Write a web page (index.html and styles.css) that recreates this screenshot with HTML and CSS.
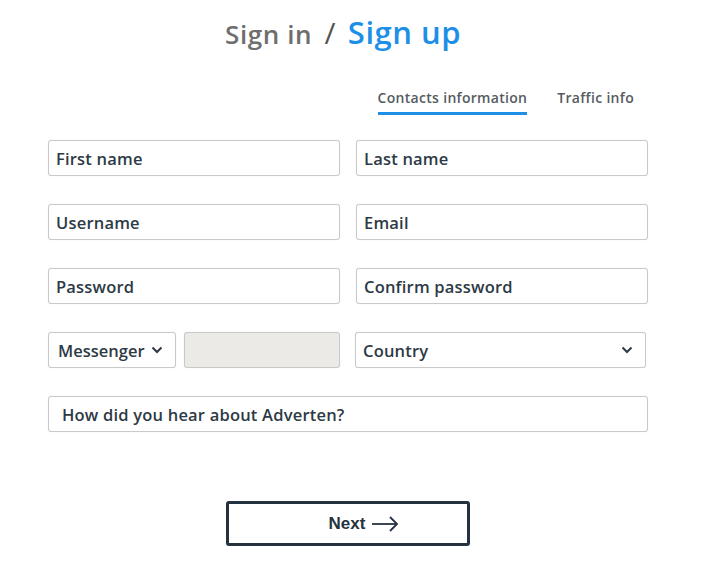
FILE: index.html
```html
<!DOCTYPE html>
<html lang="en">
<head>
  <meta charset="utf-8" />
  <meta name="viewport" content="width=device-width, initial-scale=1" />
  <title>Sign up</title>
  <link rel="stylesheet" href="styles.css">
</head>
<body>
  <div class="wrapper">
    <h1 class="title">
      <span class="title-in">Sign in</span>
      <span class="title-slash">/</span>
      <span class="title-up">Sign up</span>
    </h1>

    <div class="tabs">
      <span class="tab active">Contacts information</span>
      <span class="tab">Traffic info</span>
    </div>

    <form class="form">
      <div class="field">First name</div>
      <div class="field">Last name</div>

      <div class="field">Username</div>
      <div class="field">Email</div>

      <div class="field">Password</div>
      <div class="field">Confirm password</div>

      <div class="messenger-row">
        <div class="field select messenger">Messenger
          <svg class="chev" width="12" height="8" viewBox="0 0 12 8"><polyline points="1.5,1.5 6,6 10.5,1.5" fill="none" stroke="#2d3a45" stroke-width="2"/></svg>
        </div>
        <div class="field disabled"></div>
      </div>
      <div class="field select country">Country
        <svg class="chev" width="12" height="8" viewBox="0 0 12 8"><polyline points="1.5,1.5 6,6 10.5,1.5" fill="none" stroke="#2d3a45" stroke-width="2"/></svg>
      </div>

      <div class="field wide">How did you hear about Adverten?</div>
    </form>

    <div class="actions">
      <button class="next">Next
        <svg width="28" height="16" viewBox="0 0 28 16"><line x1="1" y1="8" x2="26" y2="8" stroke="#253340" stroke-width="1.8"/><polyline points="19,1 26,8 19,15" fill="none" stroke="#253340" stroke-width="1.8"/></svg>
      </button>
    </div>
  </div>
</body>
</html>
```

FILE: styles.css
```css
body {
  margin: 0;
  background: #fff;
  font-family: "Open Sans", "Noto Sans", sans-serif;
  color: #2d3a45;
}

.wrapper {
  width: 600px;
  margin-left: 48px;
  padding-top: 14px;
}

.title {
  margin: 0;
  text-align: center;
  font-weight: 600;
  line-height: 36px;
  padding-right: 10px;
}

.title-in {
  font-size: 26px;
  letter-spacing: 0.6px;
  color: #6e6e6e;
}

.title-slash {
  font-size: 30px;
  font-weight: 500;
  color: #555;
  margin: 0 4px;
}

.title-up {
  font-size: 31px;
  letter-spacing: 0.5px;
  color: #1d8fe6;
}

.tabs {
  display: flex;
  justify-content: flex-end;
  gap: 30px;
  padding-right: 14px;
  margin-top: 36px;
}

.tab {
  font-size: 14px;
  font-weight: 600;
  letter-spacing: 0.3px;
  color: #555b60;
  padding-bottom: 5px;
  border-bottom: 3px solid transparent;
}

.tab.active {
  border-bottom-color: #1d8fe6;
}

.form {
  display: grid;
  grid-template-columns: 1fr 1fr;
  column-gap: 16px;
  row-gap: 28px;
  margin-top: 25px;
}

.field {
  height: 36px;
  box-sizing: border-box;
  border: 1px solid #c9c9c9;
  border-radius: 3px;
  box-shadow: 0 0 1px rgba(0, 0, 0, 0.15);
  padding: 0 7px;
  display: flex;
  align-items: center;
  font-size: 16.5px;
  font-weight: 600;
  letter-spacing: 0.2px;
  color: #2d3a45;
  background: #fff;
}

.messenger-row {
  display: flex;
  gap: 8px;
}

.messenger {
  width: 128px;
  flex: none;
  padding-left: 9px;
  gap: 6px;
  letter-spacing: 0;
}

.disabled {
  flex: 1;
  background: #ebeae6;
}

.select {
  justify-content: space-between;
  padding-right: 12px;
}

.country {
  margin-left: -1px;
  margin-right: 2px;
}

.wide {
  grid-column: 1 / 3;
  padding-left: 13px;
}

.actions {
  display: flex;
  justify-content: center;
  margin-top: 69px;
}

.next {
  width: 244px;
  height: 45px;
  border: 3px solid #253340;
  border-radius: 3px;
  background: #fff;
  font-family: "Liberation Sans", Arial, sans-serif;
  font-size: 17px;
  font-weight: bold;
  color: #253340;
  display: flex;
  align-items: center;
  justify-content: center;
  gap: 6px;
  padding-left: 38px;
}
```
